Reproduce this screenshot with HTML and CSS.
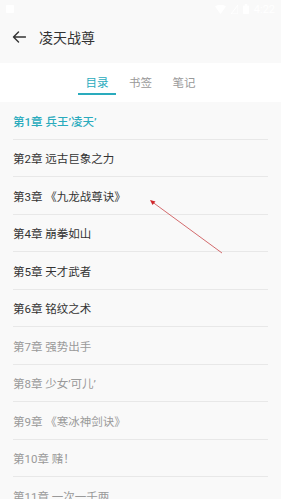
FILE: index.html
```html
<!DOCTYPE html>
<html lang="zh-CN">
<head>
<meta charset="utf-8">
<link rel="stylesheet" href="styles.css">
</head>
<body>
<div class="page">
  <div class="statusbar">
    <svg class="sb-left" width="8" height="8" viewBox="0 0 8 8"><rect width="8" height="8" rx="1" fill="#fff"/></svg>
    <div class="sb-right">
      <svg width="11" height="9" viewBox="0 0 11 9"><path d="M0 1.5 Q5.5 -2 11 1.5 L5.5 9 Z" fill="#fff"/></svg>
      <svg width="7" height="9" viewBox="0 0 7 9"><path d="M7 0 L7 9 L0 9 Z" fill="none" stroke="#fff" stroke-width="1"/></svg>
      <svg width="6" height="10" viewBox="0 0 6 10"><rect x="0" y="1.5" width="6" height="8.5" rx="0.8" fill="#fff"/><rect x="1.8" y="0" width="2.4" height="2" fill="#fff"/></svg>
      <span class="time">4:22</span>
    </div>
  </div>
  <header class="header">
    <svg class="back" width="14" height="12" viewBox="0 0 14 12"><path d="M13.5 6 H1.5 M6.5 1 L1.5 6 L6.5 11" fill="none" stroke="#333" stroke-width="1.4" stroke-linecap="round" stroke-linejoin="round"/></svg>
    <span class="title">凌天战尊</span>
  </header>
  <nav class="tabs">
    <div class="tab active">目录</div>
    <div class="tab">书签</div>
    <div class="tab">笔记</div>
  </nav>
  <ul class="list">
    <li class="item current">第1章 兵王’凌天’</li>
    <li class="item">第2章 远古巨象之力</li>
    <li class="item">第3章 《九龙战尊诀》</li>
    <li class="item">第4章 崩拳如山</li>
    <li class="item">第5章 天才武者</li>
    <li class="item">第6章 铭纹之术</li>
    <li class="item dim">第7章 强势出手</li>
    <li class="item dim">第8章 少女’可儿’</li>
    <li class="item dim">第9章 《寒冰神剑诀》</li>
    <li class="item dim">第10章 赌！</li>
    <li class="item dim">第11章 一次一千两</li>
  </ul>
  <svg class="annot" width="281" height="499" viewBox="0 0 281 499">
    <line x1="151" y1="201" x2="222" y2="253" stroke="#c9474a" stroke-opacity="0.8" stroke-width="1"/>
    <path d="M150 200 L155.5 201.5 L152.5 205 Z" fill="#d0262b"/>
  </svg>
</div>
</body>
</html>
```
FILE: styles.css
```css
* { box-sizing: border-box; }
html, body { margin: 0; padding: 0; }
body {
  font-family: Roboto, "Noto Sans CJK SC", sans-serif;
  background: #f9f9f9;
  width: 281px;
  height: 499px;
  overflow: hidden;
}
.page { position: relative; width: 281px; height: 499px; background: #f9f9f9; }
.statusbar {
  height: 18px;
  display: flex;
  align-items: center;
  justify-content: space-between;
  padding: 0 6px 0 6px;
}
.sb-right { display: flex; align-items: center; gap: 5px; }
.time { color: #fff; font-size: 11px; line-height: 1; }
.header {
  height: 45px;
  display: flex;
  align-items: center;
  padding-left: 12px;
  padding-bottom: 8px;
}
.back { flex: none; }
.title {
  margin-left: 13px;
  font-size: 14px;
  color: #333;
}
.tabs {
  height: 39px;
  background: #fff;
  display: flex;
  justify-content: center;
  gap: 5.5px;
  padding-left: 0;
}
.tab {
  width: 38px;
  display: flex;
  align-items: center;
  justify-content: center;
  font-size: 11.5px;
  color: #999;
  padding-bottom: 2px;
  position: relative;
}
.tab.active { color: #2aabbd; }
.tab.active::after {
  content: "";
  position: absolute;
  left: 0; right: 0;
  bottom: 7.5px;
  height: 2px;
  background: #2aabbd;
}
.list {
  list-style: none;
  margin: 0;
  padding: 0 13px;
}
.item {
  height: 37.5px;
  border-bottom: 1px solid #e8e8e8;
  display: flex;
  align-items: center;
  font-size: 11.5px;
  color: #333;
  padding-top: 1px;
}
.item.current { color: #2aabbd; font-weight: 500; }
.item.dim { color: #9a9a9a; }
.annot { position: absolute; left: 0; top: 0; pointer-events: none; }
```
